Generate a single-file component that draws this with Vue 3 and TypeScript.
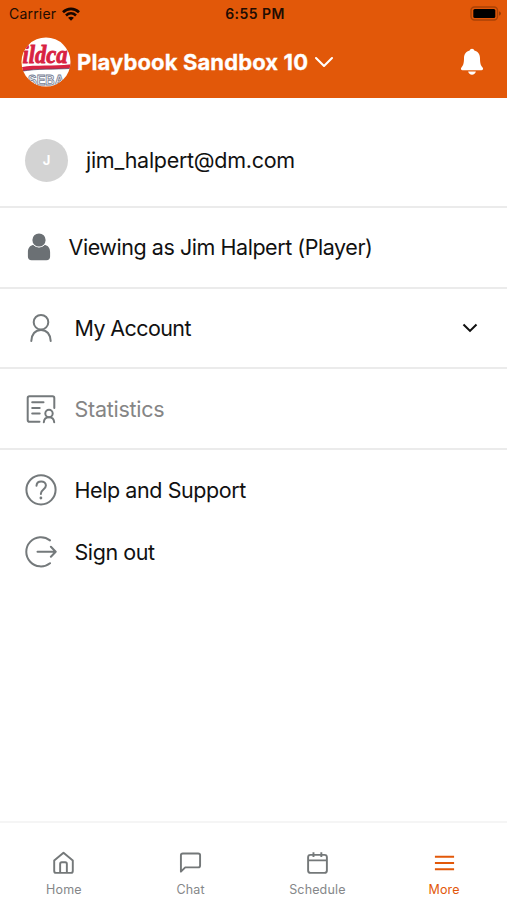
<script setup lang="ts">
import { ref } from 'vue'

type TabName = 'Home' | 'Chat' | 'Schedule' | 'More'
const tabs: TabName[] = ['Home', 'Chat', 'Schedule', 'More']
const active = ref<TabName>('More')
</script>

<template>
  <div class="screen">
    <header class="top">
      <div class="status">
        <div class="carrier">
          <span class="carrier-name">Carrier</span>
          <svg class="wifi" width="18" height="14" viewBox="0 0 18 14" fill="none" stroke="#160600" stroke-width="2.7">
            <path d="M1 5.2C5.7.7 12.3.7 17 5.2" />
            <path d="M4 8.4c3-2.7 7-2.7 10 0" />
            <path d="M9 13.7 6.1 10.8c1.7-1.4 4.1-1.4 5.8 0z" fill="#160600" stroke="none" />
          </svg>
        </div>
        <span class="time">6:55 PM</span>
        <svg class="battery" width="31" height="15" viewBox="0 0 31 15">
          <rect x="1" y="1" width="26.5" height="13" rx="3.5" fill="none" stroke="#a94207" stroke-width="1.4" />
          <rect x="3.3" y="3" width="22" height="9" rx="1.5" fill="#000" />
          <path d="M29 5.2q2 .9 2 2.3t-2 2.3z" fill="#993c07" />
        </svg>
      </div>
      <div class="team-bar">
        <svg class="logo" width="50" height="50" viewBox="0 0 50 50">
          <defs>
            <clipPath id="logo-disc"><circle cx="25" cy="25" r="24.5" /></clipPath>
          </defs>
          <g clip-path="url(#logo-disc)">
            <rect width="50" height="50" fill="#fff" />
            <text class="script" x="1.500" y="25.500" textLength="45" lengthAdjust="spacingAndGlyphs">ildca</text>
            <path d="M0 30.2C16 27.4 31 29.8 50 27.3v4.1c-17 1.2-33-.2-50 3z" fill="#d82242" />
            <path d="M0 34.4C17 31.2 33 32.6 50 31.4" fill="none" stroke="#465070" stroke-width=".7" />
            <text class="block" x="7" y="47.500" textLength="36" lengthAdjust="spacingAndGlyphs">SEBA</text>
          </g>
        </svg>
        <h1>Playbook Sandbox 10</h1>
        <svg class="team-chevron" width="20" height="12" viewBox="0 0 20 12" fill="none" stroke="#fff" stroke-width="2.1" stroke-linecap="round" stroke-linejoin="round">
          <path d="m2 2 8 8 8-8" />
        </svg>
        <svg class="bell" width="24" height="28" viewBox="0 0 24 28" fill="#fff">
          <path d="M12 .8c-1.2 0-2 .7-2.3 1.8C6 3.5 4 6.5 4 10.2c0 5.1-.8 7.2-2.4 9.1C.3 20.8 1 22.2 2.6 22.2h18.8c1.6 0 2.3-1.4 1-2.9C20.800 17.400 20 15.300 20 10.200 20 6.500 18 3.500 14.300 2.600 14 1.500 13.200.8 12 .8z" />
          <path d="M8.100 23.600h7.800c-.4 1.900-2 3.200-3.900 3.200s-3.500-1.300-3.900-3.200z" />
        </svg>
      </div>
    </header>

    <main>
      <div class="row user">
        <span class="avatar">J</span>
        <span class="label email">jim_halpert@dm.com</span>
      </div>
      <div class="row viewing">
        <svg class="person" width="24" height="28" viewBox="0 0 24 28" fill="#6b7074">
          <path d="M6.300 11.800C3 12.600.9 15 .9 19.200v4.300q0 3.700 3.700 3.700h14.800q3.700 0 3.700-3.700v-4.300c0-4.200-2.100-6.600-5.400-7.400-1.500 1.500-3.500 2.400-5.700 2.400s-4.200-.9-5.700-2.400z" />
          <circle cx="12" cy="7" r="7.400" fill="#fff" />
          <circle cx="12" cy="7" r="6.600" />
        </svg>
        <span class="label viewing-label">Viewing as Jim Halpert (Player)</span>
      </div>
      <button class="row account" type="button">
        <svg class="icon" width="32" height="32" viewBox="0 0 32 32">
          <circle cx="16" cy="10.200" r="7.300" />
          <path d="M6.300 29c.2-6.500 3.800-11.100 9.700-11.100s9.500 4.600 9.700 11.100" />
        </svg>
        <span class="label account-label">My Account</span>
        <svg class="row-chevron" width="16" height="10" viewBox="0 0 16 10" fill="none" stroke="#111" stroke-width="2.100">
          <path d="m1.500 1.500 6.500 6.400 6.500-6.400" />
        </svg>
      </button>
      <button class="row stats" type="button">
        <svg class="icon" width="32" height="32" viewBox="0 0 32 32">
          <path d="M14.500 28.700h-10q-1.800 0-1.800-1.800V5q0-1.800 1.800-1.800H27.500q1.800 0 1.800 1.800v10" />
          <path d="M7.200 9.200h11.300M7.200 14.900h7.500M7.200 20.600h7.500" />
          <circle cx="24" cy="20.500" r="3.700" />
          <path d="M18.800 29.300c.2-3.100 2.200-5.100 5.200-5.100s5 2 5.200 5.100" />
        </svg>
        <span class="label stats-label">Statistics</span>
      </button>
      <button class="row help" type="button">
        <svg class="icon" width="32" height="32" viewBox="0 0 32 32">
          <circle cx="16" cy="15.800" r="14.600" />
          <path d="M11.500 11.800c.1-2.800 1.900-4.400 4.700-4.400 2.700 0 4.700 1.700 4.700 4.200 0 3.900-5 4.100-5 8v.5" />
          <circle cx="15.900" cy="24" r="1.400" class="dot" />
        </svg>
        <span class="label help-label">Help and Support</span>
      </button>
      <button class="row signout" type="button">
        <svg class="icon" width="32" height="32" viewBox="0 0 32 32">
          <path d="M25 4.400A14.600 14.600 0 1 0 25 27.200M12.500 15.800h18M25.900 10.800l4.800 5-4.800 5" />
        </svg>
        <span class="label signout-label">Sign out</span>
      </button>
    </main>

    <nav class="tabs">
      <button v-for="tab in tabs" :key="tab" type="button" class="tab" :class="{ active: active === tab }" @click="active = tab">
        <svg width="23" height="24" viewBox="0 0 24 24">
          <template v-if="tab === 'Home'">
            <path d="M2.300 9.300 12 1.300l9.700 8v11q0 2-2 2H4.300q-2 0-2-2z" />
            <path d="M8.500 22v-9q0-1.700 1.700-1.700h3.600q1.700 0 1.700 1.700v9" />
          </template>
          <path v-else-if="tab === 'Chat'" d="M2 21V4q0-2 2-2h16q2 0 2 2v10.600q0 2-2 2H6.500z" />
          <template v-else-if="tab === 'Schedule'">
            <rect x="2.200" y="3.500" width="19.600" height="18.800" rx="2.500" />
            <path d="M2.200 9.300h19.600M7.800.8v5M16 .8v5" />
          </template>
          <path v-else d="M2 5.500h20M2 12h20M2 18.500h20" />
        </svg>
        <span>{{ tab }}</span>
      </button>
    </nav>
  </div>
</template>

<style>
body {
  margin: 0;
  background: #fff;
}
</style>

<style scoped>
.screen {
  box-sizing: border-box;
  height: 900px;
  display: flex;
  flex-direction: column;
  overflow: hidden;
  background: #fff;
  color: #111;
  font-family: Inter, "Liberation Sans", sans-serif;
}
svg {
  display: block;
  flex-shrink: 0;
}
button {
  border: 0;
  background: none;
  font: inherit;
  color: inherit;
  text-align: left;
}
.top {
  box-sizing: border-box;
  height: 98px;
  flex-shrink: 0;
  background: #e25809;
}
.status {
  height: 27px;
  padding: 0 6px 0 9px;
  display: grid;
  grid-template-columns: 1fr auto 1fr;
  align-items: center;
  color: #210c02;
  font-size: 14px;
  line-height: 16px;
}
.carrier {
  display: flex;
  align-items: center;
  gap: 6px;
}
.carrier-name {
  letter-spacing: 0.200px;
}
.time {
  font-weight: 600;
  letter-spacing: 0.450px;
}
.battery {
  justify-self: end;
}
.team-bar {
  height: 70px;
  display: flex;
  align-items: center;
  padding: 0 23px 0 21px;
}
.script {
  font: italic 700 26px "Liberation Serif", serif;
  fill: #d82242;
  stroke: #d82242;
  stroke-width: 0.900px;
}
.block {
  font: 700 15px "Liberation Sans", sans-serif;
  fill: #fff;
  stroke: #737b92;
  stroke-width: 0.900px;
}
h1 {
  margin: 0 0 0 6px;
  color: #fff;
  font-size: 22px;
  font-weight: 700;
  line-height: 28px;
  letter-spacing: 0.130px;
  white-space: nowrap;
  -webkit-text-stroke: 0.300px #fff;
}
.team-chevron {
  margin-left: 6px;
}
.bell {
  margin-left: auto;
}
main {
  flex: 1;
  display: flex;
  flex-direction: column;
}
.row {
  box-sizing: border-box;
  display: flex;
  align-items: center;
  padding: 0 29px 0 24.500px;
  border-bottom: 2px solid #ebebeb;
}
.user {
  height: 110px;
  padding-top: 16px;
  padding-left: 25px;
}
.viewing,
.stats {
  height: 81px;
}
.viewing {
  padding-bottom: 1px;
}
.account {
  height: 80px;
}
.help {
  height: 80px;
  border: 0;
}
.signout {
  height: 44px;
  border: 0;
}
.avatar {
  width: 43px;
  height: 43px;
  border-radius: 50%;
  display: grid;
  place-items: center;
  background: #d3d3d3;
  color: #fff;
  font-size: 13px;
  font-weight: 700;
}
.label {
  font-size: 21.500px;
  line-height: 28px;
  white-space: nowrap;
}
.email {
  margin-left: 18px;
  letter-spacing: -0.280px;
}
.person {
  margin-left: 2px;
}
.viewing-label {
  margin-left: 18px;
  letter-spacing: -0.450px;
}
.account-label,
.stats-label,
.help-label,
.signout-label {
  margin-left: 18px;
  letter-spacing: -0.420px;
}
.account-label {
  letter-spacing: -0.600px;
}
.stats-label {
  color: #858585;
  letter-spacing: -0.270px;
}
.icon {
  fill: none;
  stroke: #74797b;
  stroke-width: 2;
  stroke-linecap: round;
  stroke-linejoin: round;
}
.icon .dot {
  fill: #74797b;
  stroke: none;
}
.row-chevron {
  margin-left: auto;
}
.tabs {
  box-sizing: border-box;
  height: 79px;
  flex-shrink: 0;
  display: grid;
  grid-template-columns: repeat(4, 1fr);
  border-top: 2px solid #f5f5f5;
}
.tab {
  display: flex;
  flex-direction: column;
  align-items: center;
  padding: 28px 0 0 1px;
  color: #858789;
  font-size: 12.500px;
  line-height: 16px;
}
.tab svg {
  fill: none;
  stroke: #747879;
  stroke-width: 2;
  stroke-linejoin: round;
}
.tab span {
  margin-top: 6.500px;
  letter-spacing: 0.150px;
}
.tab.active {
  color: #e25809;
}
.tab.active svg {
  stroke: #e25809;
}
</style>
